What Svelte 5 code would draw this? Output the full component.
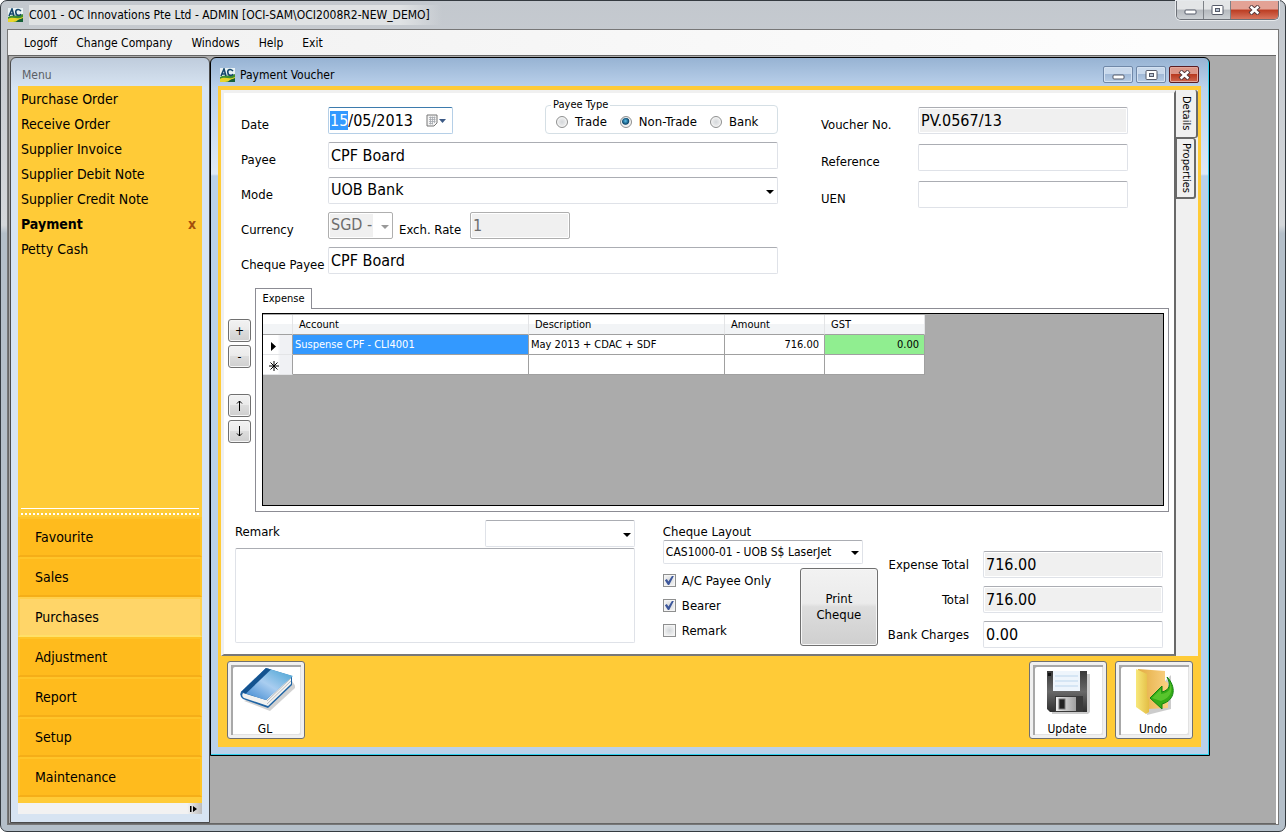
<script lang="ts">
	import { onMount } from 'svelte';

	const menuBar = ['Logoff', 'Change Company', 'Windows', 'Help', 'Exit'];
	const documents = [
		'Purchase Order',
		'Receive Order',
		'Supplier Invoice',
		'Supplier Debit Note',
		'Supplier Credit Note',
		'Payment',
		'Petty Cash',
	];
	const modules = ['Favourite', 'Sales', 'Purchases', 'Adjustment', 'Report', 'Setup', 'Maintenance'];
	const payeeTypes = ['Trade', 'Non-Trade', 'Bank'];

	let activeDocument = $state('Payment');
	let activeModule = $state('Purchases');
	let payeeType = $state('Non-Trade');
	let flags = $state([
		{ label: 'A/C Payee Only', on: true },
		{ label: 'Bearer', on: true },
		{ label: 'Remark', on: false },
	]);

	let dateInput: HTMLInputElement;

	// the day part is selected when the voucher opens
	onMount(() => {
		dateInput.focus();
		dateInput.setSelectionRange(0, 2);
	});
</script>

{#snippet logo()}
	<svg class="logo" viewBox="0 0 15 14" aria-hidden="true">
		<rect width="15" height="14" fill="#e9f2f4" />
		<path d="M0 9C4 6 10 9 15 6V14H0Z" fill="#3f8f2f" />
		<path d="M0 11C5 8 9 12 15 9V12L5 14H0Z" fill="#e8d52c" />
		<path d="M8 14C10 11 13 11 15 10V14Z" fill="#16603a" />
		<path d="M1 8L4 1L6 8M2 6H6M13 3C10 0 7 2 8 5C8 8 12 8 13 6" fill="none" stroke="#15476d" stroke-width="1.6" />
	</svg>
{/snippet}

{#snippet caption()}
	<div class="controls">
		<button aria-label="Minimize">
			<svg viewBox="0 0 13 10"><rect x="1" y="5" width="11" height="4" rx="1" fill="#fff" stroke="#555a68" /></svg>
		</button>
		<button aria-label="Maximize">
			<svg viewBox="0 0 13 10">
				<rect x="1" y=".5" width="11" height="9" rx="1" fill="#fff" stroke="#555a68" />
				<rect x="4.5" y="3.5" width="4" height="3" fill="#b8c4d4" stroke="#555a68" />
			</svg>
		</button>
		<button class="close" aria-label="Close">
			<svg viewBox="0 0 13 10">
				<path d="M2 1L11 9M11 1L2 9" stroke="#54393c" stroke-width="4.4" />
				<path d="M2.6 1.5L10.4 8.5M10.4 1.5L2.6 8.5" stroke="#fff" stroke-width="2.4" />
			</svg>
		</button>
	</div>
{/snippet}

{#snippet arrow()}
	<svg class="arrow" viewBox="0 0 8 4" aria-hidden="true"><path d="M0 0H8L4 4Z" fill="currentColor" /></svg>
{/snippet}

<div class="app">
	<header class="titlebar">
		{@render logo()}
		<span class="title">C001 - OC Innovations Pte Ltd - ADMIN [OCI-SAM\OCI2008R2-NEW_DEMO]</span>
		{@render caption()}
	</header>

	<div class="client">
		<nav class="menubar">
			{#each menuBar as item}
				<button>{item}</button>
			{/each}
		</nav>

		<div class="mdi">
			<aside class="sidebar">
				<h2>Menu</h2>
				<div class="sidebar-body">
					<ul class="documents">
						{#each documents as item}
							<li class:active={item === activeDocument}>
								<button onclick={() => (activeDocument = item)}>{item}</button>
								{#if item === activeDocument}
									<button class="dismiss" aria-label="Close {item}">x</button>
								{/if}
							</li>
						{/each}
					</ul>
					<div class="splitter"></div>
					<div class="modules">
						{#each modules as item}
							<button class:active={item === activeModule} onclick={() => (activeModule = item)}>{item}</button>
						{/each}
					</div>
					<div class="overflow">
						<svg viewBox="0 0 7 6"><path d="M0 0H1.5V6H0ZM3 0L7 3L3 6Z" /></svg>
					</div>
				</div>
			</aside>

			<main class="window">
				<header class="window-title">
					{@render logo()}
					<span class="title">Payment Voucher</span>
					{@render caption()}
				</header>

				<div class="window-body">
					<div class="tabs">
						<div class="page">
							<div class="form">
								<div class="left">
									<div class="row date-row">
										<label for="date">Date</label>
										<span class="date">
											<input id="date" bind:this={dateInput} value="15/05/2013" />
											<button aria-label="Open calendar">
												<svg viewBox="0 0 21 13">
													<path d="M1 1H11V9L8 12H1Z" fill="#f4f4f4" stroke="#777" />
													<path d="M3 3.5H9.5M3 5.5H9.5M3 7.5H9.5M3 9.5H7M4.5 2.5V10.5M6.5 2.5V10.5M8.5 2.5V9" stroke="#a4a8ae" stroke-width=".8" />
													<path d="M13 5H20L16.5 9Z" fill="#3c5a86" />
												</svg>
											</button>
										</span>
										<fieldset>
											<legend>Payee Type</legend>
											{#each payeeTypes as type}
												<label><input type="radio" name="payee-type" value={type} bind:group={payeeType} />{type}</label>
											{/each}
										</fieldset>
									</div>
									<div class="row">
										<label for="payee">Payee</label>
										<input id="payee" class="field" value="CPF Board" />
									</div>
									<div class="row">
										<label for="mode">Mode</label>
										<span class="select">
											<select id="mode" class="field"><option>UOB Bank</option></select>
											{@render arrow()}
										</span>
									</div>
									<div class="row">
										<label for="currency">Currency</label>
										<span class="select currency">
											<select id="currency" class="field" disabled><option>SGD -</option></select>
											{@render arrow()}
										</span>
										<label class="inline" for="rate">Exch. Rate</label>
										<input id="rate" class="field rate" value="1" disabled />
									</div>
									<div class="row">
										<label for="cheque-payee">Cheque Payee</label>
										<input id="cheque-payee" class="field" value="CPF Board" />
									</div>
								</div>

								<div class="right">
									<div class="row">
										<label for="voucher">Voucher No.</label>
										<input id="voucher" class="field" value="PV.0567/13" readonly />
									</div>
									<div class="row">
										<label for="reference">Reference</label>
										<input id="reference" class="field" />
									</div>
									<div class="row">
										<label for="uen">UEN</label>
										<input id="uen" class="field" />
									</div>
								</div>
							</div>

							<div class="expense">
								<div class="row-tools">
									<div><button>+</button><button>-</button></div>
									<div>
										<button aria-label="Move up">
											<svg viewBox="0 0 7 11"><path d="M3.5 11V1M1 3.5L3.5 1L6 3.5" /></svg>
										</button>
										<button aria-label="Move down">
											<svg viewBox="0 0 7 11"><path d="M3.5 0V10M1 7.5L3.5 10L6 7.5" /></svg>
										</button>
									</div>
								</div>
								<div class="expense-tabs">
									<button class="expense-tab">Expense</button>
									<div class="expense-page">
										<div class="grid">
											<table>
												<thead>
													<tr>
														<th class="head"></th>
														<th class="account">Account</th>
														<th class="description">Description</th>
														<th class="money">Amount</th>
														<th class="money">GST</th>
													</tr>
												</thead>
												<tbody>
													<tr>
														<td class="head"><svg viewBox="0 0 10 10"><path d="M2 1L7 5.5L2 10Z" /></svg></td>
														<td class="selected">Suspense CPF - CLI4001</td>
														<td>May 2013 + CDAC + SDF</td>
														<td class="number">716.00</td>
														<td class="number gst">0.00</td>
													</tr>
													<tr>
														<td class="head">
															<svg viewBox="0 0 10 10"><path d="M5 0V10M0 5H10M1.5 1.5L8.5 8.5M8.5 1.5L1.5 8.5" stroke="#000" /></svg>
														</td>
														<td></td>
														<td></td>
														<td></td>
														<td></td>
													</tr>
												</tbody>
											</table>
										</div>
									</div>
								</div>
							</div>

							<div class="footer">
								<div class="remark">
									<div class="remark-head">
										<label for="remark">Remark</label>
										<span class="select">
											<select class="field" aria-label="Remark template"><option></option></select>
											{@render arrow()}
										</span>
									</div>
									<textarea id="remark" class="field"></textarea>
								</div>

								<div class="cheque">
									<label for="layout">Cheque Layout</label>
									<span class="select">
										<select id="layout" class="field small"><option>CAS1000-01 - UOB S$ LaserJet</option></select>
										{@render arrow()}
									</span>
									<div class="cheque-options">
										<div class="flags">
											{#each flags as flag}
												<label><input type="checkbox" bind:checked={flag.on} />{flag.label}</label>
											{/each}
										</div>
										<button class="print">Print<br />Cheque</button>
									</div>
								</div>

								<div class="totals">
									<label for="expense-total">Expense Total</label>
									<input id="expense-total" class="field" value="716.00" readonly />
									<label for="total">Total</label>
									<input id="total" class="field" value="716.00" readonly />
									<label for="charges">Bank Charges</label>
									<input id="charges" class="field" value="0.00" />
								</div>
							</div>
						</div>

						<div class="side-tabs">
							<button class="active">Details</button>
							<button>Properties</button>
						</div>
					</div>

					<div class="actions">
						<button>
							<svg viewBox="-3 0 60 50">
								<defs>
									<linearGradient id="cover" x1="0" y1="1" x2="1" y2="0">
										<stop offset="0" stop-color="#2f7fcc" />
										<stop offset=".5" stop-color="#a9cdf0" />
										<stop offset="1" stop-color="#3f9fd0" />
									</linearGradient>
								</defs>
								<path d="M6 34L32 44L58 20L54 14Z" fill="#000" opacity=".18" />
								<path d="M3 25Q1 29 5 32L30 41L54 18V9L28 1Z" fill="#1f64a4" />
								<path d="M5 26Q3 29 6 31L30 39L53 17V10L28 33Z" fill="#f2f2f0" />
								<path d="M29 34L53 11M29 37L53 14" stroke="#b9bcc0" />
								<path d="M28 1L55 9L28 33L3 25Z" fill="url(#cover)" />
								<path d="M28 1L33 2.5L8 26.5L3 25Z" fill="#14538f" />
							</svg>
							GL
						</button>
						<span class="spacer"></span>
						<button>
							<svg viewBox="-6 -1 60 50">
								<defs>
									<linearGradient id="disk" x1="0" y1="0" x2="0" y2="1">
										<stop offset="0" stop-color="#3a3a3a" />
										<stop offset=".5" stop-color="#686868" />
										<stop offset="1" stop-color="#303030" />
									</linearGradient>
									<linearGradient id="shutter">
										<stop offset="0" stop-color="#eee" />
										<stop offset="1" stop-color="#a0a0a0" />
									</linearGradient>
								</defs>
								<path d="M7 6H47V44L45 46H9Z" fill="#000" opacity=".2" />
								<path d="M4 3H44V44H7L4 41Z" fill="url(#disk)" />
								<rect x="10" y="3" width="27" height="20" fill="#eef5fc" />
								<path d="M12 8H35M12 13H35M12 18H35" stroke="#bdd6ec" />
								<rect x="5" y="5" width="3" height="3" fill="#111" />
								<path d="M12 28H40V44H12Z" fill="#3a3a3a" />
								<path d="M13 29H33V43H13Z" fill="url(#shutter)" />
								<rect x="16" y="31" width="6" height="10" fill="#222" stroke="#777" />
							</svg>
							Update
						</button>
						<button>
							<svg viewBox="-10 0 60 50">
								<defs>
									<linearGradient id="flap">
										<stop offset="0" stop-color="#f8e87a" />
										<stop offset="1" stop-color="#e3bd45" />
									</linearGradient>
									<linearGradient id="back">
										<stop offset="0" stop-color="#e2ab3f" />
										<stop offset="1" stop-color="#fad183" />
									</linearGradient>
								</defs>
								<path d="M14 48L38 42V8L16 30Z" fill="#000" opacity=".2" />
								<path d="M5 2L32 4V14L35 16V41L14 42L4 39Z" fill="url(#back)" />
								<path d="M3 2L14 7V30L16 33V45L13 47L3 40Z" fill="url(#flap)" />
								<path d="M34 10C43 19 43 33 29 37V42L17 31L29 19V25C37 23 38 17 34 10Z" fill="#34ac16" stroke="#108310" />
								<path d="M36 14C41 22 38 31 28 34L19 31L28 22V27C37 26 39 20 36 14Z" fill="#72d33c" opacity=".6" />
							</svg>
							Undo
						</button>
					</div>
				</div>
			</main>
		</div>
	</div>
</div>

<style>
	:global(body) {
		margin: 0;
		background: #fff;
	}
	.app {
		--yellow: #ffcb37;
		--sunken: #f0f0f0;
		display: flex;
		flex-direction: column;
		box-sizing: border-box;
		min-height: 100vh;
		padding: 0 6px 6px;
		border: 1px solid #343a40;
		border-radius: 7px;
		background: linear-gradient(#c3c8ce, #d4d7da 27%, #b4bfc9 28%, #b4bfc9);
		font-family: 'DejaVu Sans Condensed', 'Noto Sans', sans-serif;
		font-size: 13px;
		line-height: 16px;
		color: #000;
	}
	.app *,
	.app :global(*) {
		box-sizing: border-box;
	}
	button,
	input,
	select,
	textarea {
		margin: 0;
		padding: 0;
		font: inherit;
		color: inherit;
	}
	button {
		border: 0;
		background: none;
	}
	svg {
		display: block;
	}

	/* title bars */
	.titlebar {
		display: flex;
		align-items: center;
		gap: 6px;
		height: 28px;
		padding-left: 1px;
		font-size: 12px;
	}
	.logo {
		width: 15px;
		height: 14px;
	}
	.titlebar .title {
		padding: 2px 12px 2px 0;
		background: linear-gradient(90deg, #dfe2e4 90%, transparent);
	}
	.controls {
		display: flex;
		margin-left: auto;
	}
	.controls button {
		display: grid;
		place-items: center;
	}
	.controls svg {
		width: 13px;
		height: 10px;
	}
	.titlebar .controls {
		align-self: flex-start;
		height: 19px;
		border: 1px solid #6c7077;
		border-top: 0;
		border-radius: 0 0 5px 5px;
		overflow: hidden;
		box-shadow: 0 0 0 1px #e6e9ec;
	}
	.titlebar .controls button {
		width: 27px;
		border-right: 1px solid #7d8187;
		background: linear-gradient(#e3e5e7 45%, #b5b9be 50%, #ccd0d4);
	}
	.titlebar .controls .close {
		width: 47px;
		border: 0;
	}
	.controls .close,
	.titlebar .controls .close {
		background: linear-gradient(#e3a295 45%, #bb3c22 50%, #d8765f);
	}
	.window-title .controls {
		gap: 3px;
	}
	.window-title .controls button {
		width: 30px;
		height: 17px;
		border: 1px solid #7088a8;
		border-radius: 2px;
		background: linear-gradient(#c9d9ec 45%, #a1b9d7 50%, #b7cde6);
		box-shadow: inset 0 0 0 1px #d4e2f2;
	}
	.window-title .controls .close {
		border-color: #5b1c22;
		background: linear-gradient(#dc9688 45%, #b83a20 50%, #d0674f);
		box-shadow: inset 0 0 0 1px #e3a79b;
	}

	/* application frame */
	.client {
		flex: 1;
		display: flex;
		flex-direction: column;
		border: 1px solid #777;
		background: #fff;
	}
	.menubar {
		display: flex;
		gap: 19px;
		height: 25px;
		padding: 0 16px;
		background: linear-gradient(90deg, #f0f0f0, #fdfdfd 90%);
		font-size: 12px;
	}
	.mdi {
		flex: 1;
		display: flex;
		align-items: flex-start;
		padding: 1px 0 0 1px;
		margin-right: 2px;
		border: 1px solid #666;
		border-right: 0;
		background: #ababab;
	}

	/* left menu */
	.sidebar {
		align-self: stretch;
		flex: none;
		display: flex;
		flex-direction: column;
		width: 200px;
		padding: 0 7px 8px;
		border: 1px solid #4b4b4b;
		border-radius: 6px 6px 0 0;
		background: linear-gradient(#bfccdc, #d7e4f2 30px, #d7e4f2);
	}
	h2 {
		margin: 0;
		padding: 9px 4px 3px;
		font-size: 12px;
		line-height: 16px;
		font-weight: 400;
		color: #5a5f66;
	}
	.sidebar-body {
		flex: 1;
		display: flex;
		flex-direction: column;
		background: var(--yellow);
		font-size: 14px;
	}
	.documents {
		flex: 1;
		margin: 0;
		padding: 0 6px 0 3px;
		list-style: none;
	}
	.documents li {
		display: flex;
		align-items: center;
		justify-content: space-between;
		height: 25px;
	}
	.documents .active {
		font-weight: 700;
	}
	.documents .dismiss {
		color: #a4500c;
	}
	.splitter {
		height: 7px;
		margin: 0 3px 2px;
		border-top: 1px solid #fff;
		border-bottom: 2px dotted #fff;
	}
	.modules {
		padding-bottom: 6px;
	}
	.modules button {
		display: block;
		width: 100%;
		height: 40px;
		padding-left: 15px;
		border: 2px solid #ffc529;
		border-bottom-color: #f5ae18;
		background: #ffbb1d;
		text-align: left;
	}
	.modules button.active {
		border-color: #ffd04c;
		border-bottom-color: #ffe069;
		background: #ffd568;
	}
	.overflow {
		display: flex;
		align-items: center;
		justify-content: flex-end;
		height: 11px;
		padding-right: 5px;
		background: linear-gradient(90deg, #f2f2f2 92%, #bbb);
	}
	.overflow svg {
		width: 7px;
		height: 6px;
	}

	/* voucher window */
	.window {
		flex: 1;
		display: flex;
		flex-direction: column;
		min-width: 0;
		margin-right: 66px;
		padding: 0 8px 8px 7px;
		border: 1px solid #000;
		border-radius: 6px 6px 0 0;
		background: linear-gradient(#97b3d3, #bcd2ec 30px, #dfeaf7 116px, #bad1ea 118px);
		box-shadow: inset -1px -1px #2fd0ee;
	}
	.window-title {
		display: flex;
		align-items: center;
		gap: 5px;
		height: 28px;
		padding: 5px 2px 0 2px;
		font-size: 12px;
	}
	.window-body {
		padding: 4px 3px 8px;
		background: var(--yellow);
	}
	.tabs {
		display: flex;
	}
	.page {
		flex: 1;
		min-width: 0;
		border: 3px solid #f0f0f0;
		border-right: 2px solid #696969;
		border-bottom: 2px solid #787878;
		background: #fff;
		padding: 6px 5px 6px 4px;
	}
	.form {
		display: flex;
		gap: 43px;
		padding: 0 41px 0 13px;
	}
	.left,
	.right {
		display: flex;
		flex-direction: column;
	}
	.left {
		flex: 1;
		gap: 8px;
	}
	.right {
		flex: none;
		gap: 10px;
		width: 307px;
		padding-top: 8px;
	}
	.row {
		display: flex;
		align-items: flex-end;
		height: 27px;
	}
	.row > label {
		flex: none;
		width: 87px;
		padding-bottom: 1px;
		white-space: nowrap;
	}
	.right .row > label {
		width: 97px;
	}
	.date-row {
		height: 35px;
	}
	.field {
		flex: 1;
		width: 100%;
		min-width: 0;
		height: 27px;
		padding: 0 2px 1px;
		border: 1px solid #dfe2e8;
		border-top-color: #abadb3;
		border-radius: 2px;
		background: #fff;
		font-size: 16px;
		outline: 0;
		appearance: none;
	}
	.field:read-only:not(select),
	.field:disabled {
		background: var(--sunken);
		box-shadow: inset 0 0 0 1px #fff;
	}
	.field:disabled {
		border-color: #afafaf;
		color: #6d6d6d;
		opacity: 1;
	}
	.select {
		flex: 1;
		position: relative;
		display: flex;
	}
	.arrow {
		position: absolute;
		right: 4px;
		top: calc(50% - 1px);
		width: 8px;
		height: 4px;
		pointer-events: none;
	}
	.currency {
		flex: 0 0 65px;
		color: #999;
	}
	.currency .field:disabled {
		background: linear-gradient(90deg, #f0f0f0 44px, #fff 44px);
	}
	.row > .inline {
		width: 77px;
		padding-left: 6px;
	}
	.rate {
		flex: 0 0 100px;
	}
	.date {
		display: flex;
		width: 125px;
		height: 27px;
		padding-right: 5px;
		border: 1px solid #b5cfe7;
		border-top-color: #3d7bad;
		border-radius: 2px;
		align-items: center;
	}
	.date input {
		flex: 1;
		min-width: 0;
		height: 21px;
		padding-left: 1px;
		border: 0;
		outline: 0;
		font-size: 16px;
	}
	.date input::selection {
		background: #3399ff;
		color: #fff;
	}
	.date svg {
		width: 21px;
		height: 13px;
	}
	fieldset {
		display: flex;
		gap: 13px;
		width: 233px;
		height: 35px;
		margin: 0 0 0 auto;
		padding: 2px 10px 0;
		border: 1px solid #d5dfe5;
		border-radius: 4px;
	}
	legend {
		margin-left: -5px;
		padding: 0 2px;
		font-size: 11px;
		line-height: 12px;
	}
	fieldset label {
		display: flex;
		align-items: center;
		gap: 7px;
		height: 18px;
		white-space: nowrap;
	}
	input[type='radio'],
	input[type='checkbox'] {
		flex: none;
		width: 12px;
		height: 12px;
		appearance: none;
		border: 1px solid #8e8f8f;
		background: radial-gradient(#d4d7da, #f4f4f4 80%);
		box-shadow: inset 0 0 0 1px #f4f4f4;
	}
	input[type='radio'] {
		border-radius: 50%;
	}
	input[type='radio']:checked {
		background: radial-gradient(circle at 45% 40%, #5ac0ea, #0b486e 40%, #eee 52%);
	}
	input[type='checkbox'] {
		display: grid;
		place-items: center;
		width: 13px;
		height: 13px;
	}
	input[type='checkbox']:checked::before {
		content: '';
		width: 9px;
		height: 9px;
		background: #3d579b;
		clip-path: polygon(0 48%, 22% 34%, 40% 62%, 78% 0, 100% 0, 48% 100%, 34% 100%);
	}

	/* expense lines */
	.expense {
		display: flex;
		gap: 4px;
		margin-top: 14px;
	}
	.row-tools {
		display: flex;
		flex-direction: column;
		gap: 26px;
		padding-top: 31px;
	}
	.row-tools div {
		display: flex;
		flex-direction: column;
		gap: 3px;
	}
	.row-tools button,
	.print {
		display: grid;
		place-items: center;
		border: 1px solid #707070;
		border-radius: 3px;
		background: linear-gradient(#f2f2f2, #ebebeb 45%, #dddddd 50%, #cfcfcf);
		box-shadow: inset 0 0 0 1px #f6f6f6;
	}
	.row-tools button {
		width: 23px;
		height: 23px;
		font-size: 12px;
	}
	.row-tools svg {
		width: 7px;
		height: 11px;
		fill: none;
		stroke: #000;
	}
	.expense-tabs {
		flex: 1;
		min-width: 0;
		display: flex;
		flex-direction: column;
		align-items: stretch;
	}
	.expense-tab {
		position: relative;
		align-self: flex-start;
		width: 57px;
		height: 21px;
		margin-bottom: -1px;
		border: 1px solid #8c8c94;
		border-bottom: 0;
		background: #fff;
		font-size: 11px;
	}
	.expense-page {
		padding: 4px 4px 5px 6px;
		border: 1px solid #8c8c94;
	}
	.grid {
		height: 193px;
		padding-top: 1px;
		border: 1px solid #000;
		background: #ababab;
		overflow: hidden;
	}
	table {
		width: 662px;
		table-layout: fixed;
		border-collapse: separate;
		border-spacing: 0;
		font-size: 11px;
		line-height: 14px;
	}
	th {
		height: 20px;
		padding: 1px 6px 0;
		border-right: 1px solid #e3e4e6;
		border-bottom: 1px solid #a0a0a0;
		background: linear-gradient(#fff 45%, #f2f4f6 50%);
		font-weight: 400;
		text-align: left;
	}
	td {
		height: 20px;
		padding: 0 3px 0 2px;
		border-right: 1px solid #a0a0a0;
		border-bottom: 1px solid #a0a0a0;
		background: #fff;
	}
	.head {
		width: 30px;
	}
	td.head {
		padding: 2px 0 0 6px;
		border-color: #e3e4e6;
		border-right-color: #a0a0a0;
		background: linear-gradient(90deg, #fff 50%, #f0f1f4 60%);
	}
	td svg {
		width: 10px;
		height: 10px;
	}
	.account {
		width: 236px;
	}
	.description {
		width: 196px;
	}
	.money {
		width: 100px;
	}
	td.number {
		padding-right: 5px;
		text-align: right;
	}
	td.gst {
		background: #90ee90;
	}
	td.selected {
		background: #3399ff;
		color: #fff;
	}

	/* remark, cheque and totals */
	.footer {
		display: flex;
		gap: 28px;
		padding: 8px 6px 0 7px;
	}
	.remark {
		flex: 1;
	}
	.remark-head {
		display: flex;
		justify-content: space-between;
	}
	.remark-head label,
	.cheque > label {
		padding-top: 4px;
	}
	.remark-head .select {
		flex: 0 0 150px;
	}
	textarea.field {
		display: block;
		height: 95px;
		margin-top: 1px;
		resize: none;
	}
	.cheque {
		display: flex;
		flex-direction: column;
		flex: none;
		width: 215px;
	}
	.cheque .select {
		flex: none;
		width: 200px;
	}
	.field.small {
		height: 24px;
		font-size: 12px;
	}
	.cheque-options {
		display: flex;
		justify-content: space-between;
		padding-top: 4px;
	}
	.flags label {
		display: flex;
		align-items: center;
		gap: 6px;
		height: 25px;
		white-space: nowrap;
	}
	.print {
		width: 78px;
		height: 78px;
	}
	.totals {
		display: grid;
		grid-template-columns: auto 180px;
		grid-auto-rows: 27px;
		gap: 8px 14px;
		align-items: center;
		padding-top: 31px;
		margin-left: -18px;
		text-align: right;
		white-space: nowrap;
	}

	.side-tabs {
		width: 22px;
		background: #f0f0f0;
	}
	.side-tabs button {
		display: block;
		width: 20px;
		height: 61px;
		border: 1px solid #696969;
		border-width: 1px 2px 2px 1px;
		border-radius: 0 3px 3px 0;
		font-size: 11px;
		writing-mode: vertical-rl;
	}
	.side-tabs .active {
		width: 22px;
		height: 48px;
		border-width: 0 2px 1px 0;
	}

	.actions {
		display: flex;
		gap: 8px;
		padding: 5px 5px 0 6px;
	}
	.spacer {
		flex: 1;
	}
	.actions button {
		display: flex;
		flex-direction: column;
		align-items: center;
		justify-content: space-between;
		width: 78px;
		height: 78px;
		padding: 2px 2px 1px 0;
		border: 1px solid #707070;
		border-radius: 3px;
		background: #fff;
		box-shadow:
			inset 0 0 0 3px #f0f0f0,
			inset 5px 5px #a8a8a8,
			inset -4px -4px #e2e2e2;
		font-size: 12px;
	}
	.actions svg {
		width: 60px;
		height: 50px;
		margin-top: 3px;
	}
</style>
